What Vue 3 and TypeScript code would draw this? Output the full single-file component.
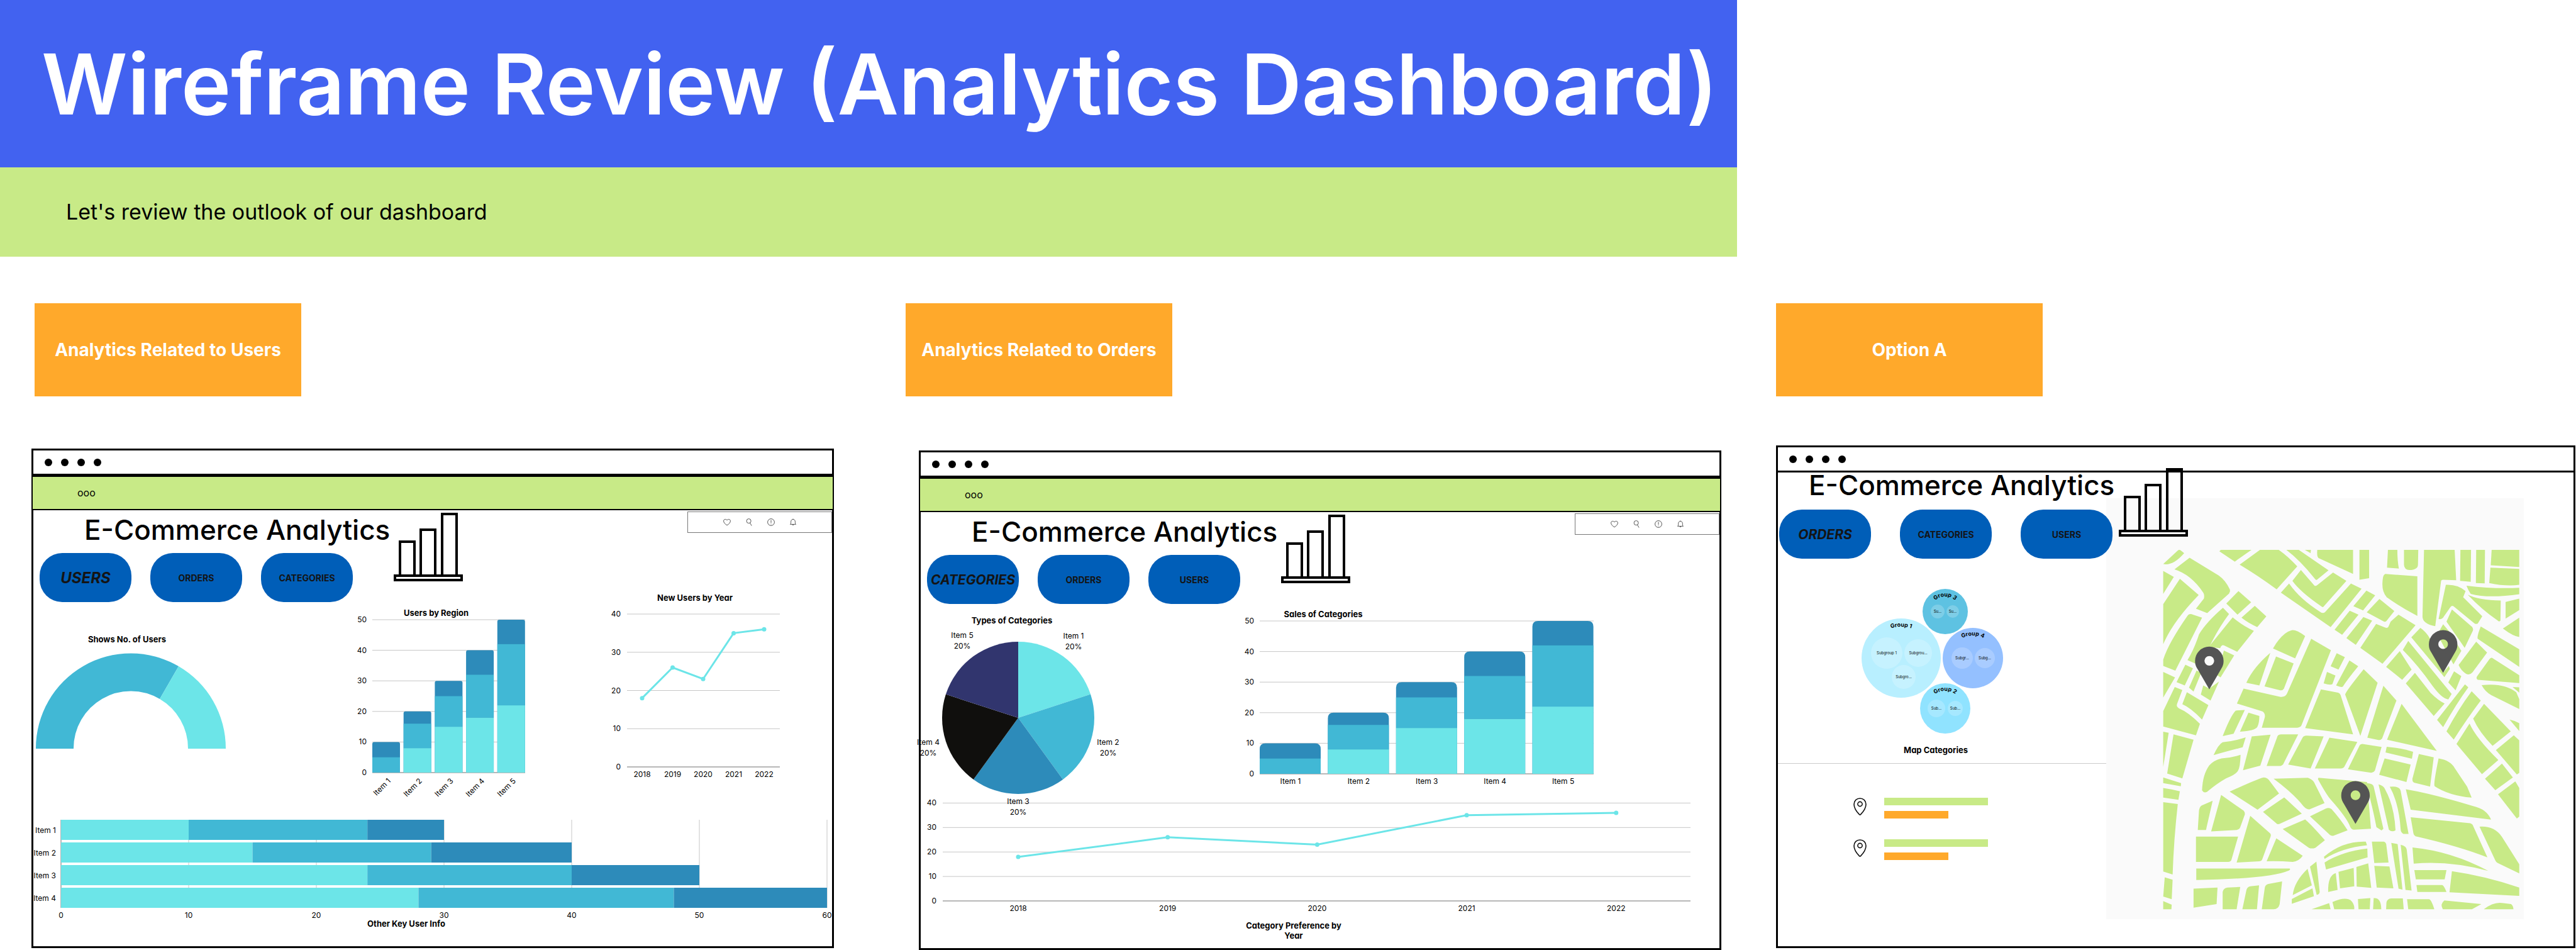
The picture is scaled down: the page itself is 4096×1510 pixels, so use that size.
<script setup lang="ts">
interface Board {
  id: 'users' | 'orders' | 'map'
  label: string
  tabs: string[]
  menuBar: boolean
}

interface Dot {
  x: number
  y: number
}

interface Bubble {
  cx: number
  cy: number
  r: number
  text: string
}

interface Group extends Bubble {
  fill: string
  arc: number
  children: Bubble[]
}

const boards: Board[] = [
  { id: 'users', label: 'Analytics Related to Users', tabs: ['USERS', 'ORDERS', 'CATEGORIES'], menuBar: true },
  { id: 'orders', label: 'Analytics Related to Orders', tabs: ['CATEGORIES', 'ORDERS', 'USERS'], menuBar: true },
  { id: 'map', label: 'Option A', tabs: ['ORDERS', 'CATEGORIES', 'USERS'], menuBar: false },
]

const palette = ['#6ce5e8', '#41b8d5', '#2d8bba']

// Stacked columns: light, middle and dark share of each item
const columns = [
  [0, 5, 5],
  [8, 8, 4],
  [15, 10, 5],
  [18, 14, 8],
  [22, 20, 8],
]

const rows = [
  [10, 14, 6],
  [15, 14, 11],
  [24, 16, 10],
  [28, 20, 12],
]

const years = [2018, 2019, 2020, 2021, 2022]
const trend = [18, 26, 23, 35, 36]
const fiveTicks = [0, 10, 20, 30, 40, 50]
const fourTicks = [0, 10, 20, 30, 40]
const sixTicks = [0, 10, 20, 30, 40, 50, 60]

const sum = (list: number[]) => list.reduce((a, b) => a + b, 0)

function stack(parts: number[], scale: number) {
  return parts.map((value, k) => ({
    start: sum(parts.slice(0, k)) * scale,
    size: value * scale,
    fill: palette[k],
  }))
}

// Column outline with only its two top corners rounded
function columnShape(x: number, width: number, base: number, height: number, r: number) {
  const top = base - height
  return `M${x} ${base}V${top + r}Q${x} ${top} ${x + r} ${top}H${x + width - r}Q${x + width} ${top} ${x + width} ${top + r}V${base}Z`
}

function columnSet(left: number, pitch: number, width: number, base: number, scale: number, r: number) {
  return columns.map((parts, i) => ({
    x: left + pitch * i,
    shape: columnShape(left + pitch * i, width, base, sum(parts) * scale, r),
    parts: stack(parts, scale).slice(0, 2).map((p) => ({ ...p, y: base - p.start - p.size })),
  }))
}

const regionColumns = columnSet(27, 49.7, 44, 246, 4.86, 3)
const salesColumns = columnSet(28, 108.4, 97, 246, 4.86, 9)
const rowBars = rows.map((parts, i) => ({ y: i * 36, parts: stack(parts, 20.3) }))

function trendDots(left: number, pitch: number, base: number, scale: number): Dot[] {
  return trend.map((value, i) => ({ x: left + pitch * i, y: base - value * scale }))
}

const newUserDots = trendDots(66, 48.5, 261, 6.075)
const preferenceDots = trendDots(155, 237.7, 162, 3.89)
const asPoints = (dots: Dot[]) => dots.map((d) => `${d.x},${d.y}`).join(' ')

const sliceColors = ['#6ce5e8', '#41b8d5', '#2d8bba', '#100f0d', '#31356e']
const slices = sliceColors.map((fill, i) => {
  const at = (turn: number) => {
    const a = turn * Math.PI * 2
    return `${155 + 121 * Math.sin(a)} ${147 - 121 * Math.cos(a)}`
  }
  return { fill, d: `M155 147L${at(i / 5)}A121 121 0 0 1 ${at((i + 1) / 5)}Z` }
})
const sliceLabels = [
  { x: 243, y: 21 },
  { x: 298, y: 190 },
  { x: 155, y: 284 },
  { x: 12, y: 190 },
  { x: 66, y: 20 },
]

const groups: Group[] = [
  {
    cx: 62, cy: 110, r: 63, arc: 50, text: 'Group 1', fill: '#b8efff',
    children: [
      { cx: 39, cy: 102, r: 25, text: 'Subgroup 1' },
      { cx: 89, cy: 102, r: 22, text: 'Subgrou…' },
      { cx: 66, cy: 140, r: 19, text: 'Subgro…' },
    ],
  },
  {
    cx: 132, cy: 36, r: 36, arc: 24, text: 'Group 3', fill: '#5ec2e2',
    children: [
      { cx: 120, cy: 36, r: 11, text: 'Su…' },
      { cx: 144, cy: 36, r: 10, text: 'Su…' },
    ],
  },
  {
    cx: 176, cy: 110, r: 48, arc: 36, text: 'Group 4', fill: '#94c0ff',
    children: [
      { cx: 159, cy: 110, r: 17, text: 'Subgr…' },
      { cx: 195, cy: 110, r: 16, text: 'Subg…' },
    ],
  },
  {
    cx: 132, cy: 190, r: 40, arc: 28, text: 'Group 2', fill: '#90e3ff',
    children: [
      { cx: 118, cy: 190, r: 14, text: 'Sub…' },
      { cx: 148, cy: 190, r: 12, text: 'Sub…' },
    ],
  },
]

const arcPath = (g: Group) =>
  `M${g.cx - g.arc} ${g.cy}A${g.arc} ${g.arc} 0 0 1 ${g.cx + g.arc} ${g.cy}`

const pins: Dot[] = [
  { x: 360, y: 608 },
  { x: 1131, y: 553 },
  { x: 842, y: 1054 },
]

// City blocks of the street map
const blocks = [
  'M208 287L255 243Q261 238 266 242L277 251Q240 294 208 287Z',
  'M295 266L391 325Q414 341 428 372Q430 378 425 385L353 450L316 435L342 402Q345 390 340 382Q300 322 245 305Z',
  'M208 310L243 330L208 386Z',
  'M263 336L325 390Q240 478 208 553V420Z',
  'M300 453L336 465L248 641L208 625V604Q225 550 287 460Q292 452 300 453Z',
  'M405 432L425 453Q390 500 360 562L320 620L288 606Q310 570 326 520Q350 480 405 432Z',
  'M437 464Q470 492 507 509L452 578L408 557Q400 554 396 566L358 562Z',
  'M456 377L498 414L453 455L416 418Z',
  'M510 426L548 461L518 496Q490 484 466 465Z',
  'M408 574L442 590L397 663L385 655Z',
  'M281 621L306 633L279 690L252 679Z',
  'M318 640L333 648L308 710L293 697Z',
  'M340 690L360 700L392 677L364 740L332 720Z',
  'M208 645L247 663L208 730Z',
  'M246 695L271 705L254 750Q250 760 260 766Q290 778 329 817L316 855L208 826V775Z',
  'M286 712L357 755L336 803Q300 765 271 752Z',
  'M208 843L226 847L208 960Z',
  'M242 852L308 870L271 998L221 982Z',
  'M208 995L267 1014L266 1024L208 1014Z',
  'M208 1030Q235 1034 263 1041L258 1069L208 1062Z',
  'M208 1077L256 1083Q243 1200 239 1317L208 1307Z',
  'M213 1326L239 1334L236 1399L208 1390Z',
  'M208 1405L236 1417L235 1432H208Z',
  'M398 240H499L444 279L393 245Z',
  'M527 240H589Q620 262 650 295L582 371Q520 325 460 289Z',
  'M614 240H655L753 308L715 339Q712 341 709 337Q660 275 614 240Z',
  'M662 307L706 358Q710 362 716 357L768 315L812 343L738 427Q735 432 730 428Q660 380 634 343Z',
  'M623 352Q660 405 726 446Q735 453 742 446L827 352L862 369L760 496L596 382Z',
  'M675 240H695L694 251Z',
  'M716 240H834V320L720 267Q714 262 716 240Z',
  'M855 240H887V334L855 339Z',
  'M878 375L907 391L867 441L835 427Z',
  'M921 403L970 443L945 475Q942 480 936 478L879 447Z',
  'M823 442L852 455L798 522L773 505Z',
  'M868 463L897 475L843 555L812 533Z',
  'M984 455L1040 490L931 618L858 565L910 486L940 498Q946 500 950 496L958 478Z',
  'M949 240H980Q980 275 985 302L946 299Z',
  'M1002 240H1049L1048 290Q1047 306 1020 307Q1003 306 1002 290Z',
  'M940 320L1046 328V459Q990 430 945 397Q925 375 933 330Q935 322 940 320Z',
  'M1068 240H1169L1174 341L1131 339Q1124 339 1124 345L1105 493Q1062 485 1063 460Z',
  'M1188 240H1223L1222 346L1187 343Z',
  'M1240 240H1269L1268 351L1239 350Z',
  'M1291 240H1382V297L1288 291Z',
  'M1287 299L1382 303V356Q1340 362 1283 350Z',
  'M1208 359Q1300 370 1382 366V387Q1280 402 1222 386Q1214 375 1208 359Z',
  'M1212 389Q1250 408 1321 408L1320 475Q1316 480 1310 474Q1260 440 1212 389Z',
  'M1337 413L1382 402V440L1337 468Z',
  'M1382 465V529Q1362 527 1328 501Z',
  'M1140 356Q1180 354 1205 377L1197 397L1260 460L1245 485Q1238 488 1232 482L1165 427Q1159 424 1155 430L1130 466Q1122 472 1116 469Z',
  'M1160 438L1226 495Q1231 500 1229 508L1202 565L1142 478Z',
  'M1131 487L1150 510L1191 575L1165 620L1112 520Z',
  'M1255 494L1382 570V628L1245 535Q1242 527 1255 494Z',
  'M1240 545L1276 581L1228 646Q1218 658 1205 650Q1190 640 1182 622Z',
  'M1292 598L1382 656V682L1245 671Q1238 666 1244 658L1284 602Q1288 597 1292 598Z',
  'M1258 689Q1330 680 1372 712L1382 735V768L1290 722Q1270 712 1258 689Z',
  'M1360 695L1382 696V714Z',
  'M1350 803Q1366 806 1382 815V841Z',
  'M1056 499Q1075 512 1088 535L1131 648L1150 625L1153 635L1135 662L1026 530Z',
  'M1016 542L1159 718L1148 736Q1128 735 1095 690Q1050 625 998 572Z',
  'M988 576L1027 637L996 671L943 628Z',
  'M1038 648L1090 715Q1115 740 1136 750L1100 791L1008 683Z',
  'M1167 643L1191 659L1172 706L1148 680Z',
  'M1203 686L1214 696Q1175 750 1131 828L1111 804Z',
  'M1225 709L1255 740Q1210 800 1166 869L1142 842Q1180 770 1225 709Z',
  'M1266 751L1354 842L1294 890Q1250 845 1230 800Z',
  'M1218 816Q1240 865 1313 937L1259 984L1175 884Z',
  'M1364 855L1382 872V980L1374 985L1305 904Z',
  'M1325 949L1361 995L1303 1037L1269 999Z',
  'M1369 1008L1382 1030V1125L1374 1131L1312 1051Z',
  'M676 526L643 600L570 567Q600 515 630 507Q645 503 676 526Z',
  'M561 582L525 690L482 681Q505 630 561 582Z',
  'M580 594L638 617L606 700Q602 707 594 706L542 693Z',
  'M696 535L761 573L664 822Q660 830 650 830H533L543 795Q545 782 535 776Q500 765 451 750L473 700L595 728Q612 729 617 715Z',
  'M780 583L807 596L786 637L760 626Z',
  'M748 645L776 657L766 685Q760 690 737 683Z',
  'M822 607L851 626Q815 670 800 694Q794 697 778 690Z',
  'M869 636L915 681L858 857L808 720Q808 712 869 636Z',
  'M934 691L977 740L930 865Q926 871 918 871L881 863Z',
  'M728 703L785 714Q791 716 793 722L834 852L676 831Z',
  'M994 751L1110 907L946 870Z',
  'M447 773L477 771L440 850L404 858Q430 790 447 773Z',
  'M489 780L525 791Q525 815 518 828Q510 840 461 843Z',
  'M480 862L470 895Q430 905 374 921Q390 885 404 878Q440 875 480 862Z',
  'M463 920Q462 960 455 972Q448 985 415 998Q385 1015 352 1043Q342 1048 336 1038Q338 985 360 955Q375 938 400 932Q430 930 463 920Z',
  'M500 859L562 853L528 956L471 971Z',
  'M597 852H653L604 950Q600 957 590 957H549L585 858Q588 852 597 852Z',
  'M680 856L737 859L694 965L620 952L668 862Q672 856 680 856Z',
  'M756 863L848 877L806 958Q803 965 793 965H708Z',
  'M865 884L928 894L906 972Q900 980 890 979L817 968L855 890Q858 884 865 884Z',
  'M945 893Q1000 898 1032 910L1028 933L941 912Z',
  'M938 932L1024 952L1010 1010L920 986Z',
  'M1051 917L1100 928L1088 1025L1035 1012Q1028 1008 1030 998Z',
  'M1116 932Q1155 938 1170 965L1210 1025L1225 1062Q1150 1055 1103 1024Q1098 1020 1116 932Z',
  'M427 1042Q530 995 540 995Q553 996 560 1008L590 1048L519 1102Z',
  'M572 999L685 996Q698 1000 705 1010L740 1080L690 1101Q680 1101 670 1090Q640 1050 572 999Z',
  'M607 1061L665 1115L592 1149Q585 1152 580 1146L537 1109Z',
  'M720 996L880 1010L893 1165L838 1168Q830 1169 825 1160Q815 1130 760 1068Q745 1050 718 1000Z',
  'M692 1124L745 1098Q755 1093 763 1100Q790 1130 816 1170L770 1188Q765 1190 758 1186Z',
  'M602 1166L676 1134Q700 1155 741 1203L710 1228Q698 1233 688 1228Z',
  'M399 1053L473 1105Q478 1110 477 1118L462 1160Q459 1168 450 1169L366 1174Z',
  'M371 1072L349 1169H322L326 1105Q328 1092 335 1088Z',
  'M495 1122L558 1178Q565 1183 562 1191L534 1268Q532 1273 525 1273L450 1277Z',
  'M316 1191H455L433 1268Q431 1275 422 1275H316Z',
  'M581 1197L668 1255Q655 1274 635 1275Q590 1272 549 1273Z',
  'M317 1297H625Q629 1301 622 1304Q560 1331 317 1335Z',
  'M308 1364L387 1360L384 1415L308 1427Z',
  'M420 1360L462 1358L450 1432H404V1375Q406 1362 420 1360Z',
  'M495 1356L524 1353L517 1432H469L482 1370Q484 1358 495 1356Z',
  'M555 1348L600 1340L592 1415Q588 1432 572 1432H533L543 1360Q545 1350 555 1348Z',
  'M684 1298L698 1353L635 1385Q640 1340 684 1298Z',
  'M713 1274L724 1375Q722 1385 714 1384L692 1291Z',
  'M700 1363L705 1389L632 1414V1398Z',
  'M876 1208L880 1220Q800 1228 740 1265L738 1258Q800 1205 876 1208Z',
  'M881 1231L882 1260L745 1300L740 1277Q800 1240 881 1231Z',
  'M777 1312L783 1368L752 1375Q750 1320 777 1312Z',
  'M786 1308L836 1295L838 1356L791 1363Z',
  'M845 1292L884 1280L894 1361L846 1357Z',
  'M896 1208H935Q944 1210 944 1222L951 1277L904 1279Z',
  'M904 1288L954 1290L967 1363L912 1360Z',
  'M960 1212L981 1216L997 1367L984 1364Z',
  'M991 1218Q1010 1222 1011 1235L1027 1370L1007 1368Z',
  'M877 1014Q900 1015 902 1025L934 1165L928 1171L911 1160Q900 1100 877 1014Z',
  'M918 1018Q935 1022 940 1035Q970 1090 974 1170Q962 1178 952 1168Z',
  'M955 1026Q988 1022 991 1040L1017 1182H1000Q992 1178 991 1168Q985 1080 955 1026Z',
  'M1008 1034Q1100 1050 1230 1090Q1275 1100 1289 1135L1024 1102Z',
  'M1024 1127L1220 1147Q1228 1149 1231 1158L1277 1260Q1180 1222 1040 1190Q1034 1187 1033 1180Z',
  'M1251 1158Q1300 1155 1325 1192L1382 1283V1313L1310 1278Q1305 1275 1303 1270Z',
  'M1030 1227Q1160 1240 1280 1305Q1150 1270 1034 1281Z',
  'M1036 1302H1142L1136 1333H1041Z',
  'M1043 1352H1128Q1134 1354 1142 1375H1046Z',
  'M1160 1306Q1270 1322 1382 1360V1388L1152 1376Z',
  'M755 1412L760 1432H697Z',
  'M766 1408Q830 1380 838 1425V1432H772Z',
  'M850 1398L891 1395L889 1432H852Z',
  'M902 1395Q927 1393 927 1432H900Z',
  'M960 1396H998L1001 1432H943L944 1410Q946 1397 960 1396Z',
  'M1012 1399H1085Q1092 1400 1102 1432H1016Z',
  'M1135 1403L1257 1415L1226 1432H1130Q1120 1415 1135 1403Z',
  'M1265 1432Q1300 1405 1330 1412L1355 1415Q1362 1420 1363 1432Z',
]
</script>

<template>
  <main class="canvas">
    <header class="banner">
      <h1>Wireframe Review (Analytics Dashboard)</h1>
      <p>Let's review the outlook of our dashboard</p>
    </header>

    <div class="boards">
      <section v-for="board in boards" :key="board.id" class="board" :class="board.id">
        <h2 class="label">{{ board.label }}</h2>

        <article class="frame">
          <div class="chrome"><i v-for="n in 4" :key="n"></i></div>
          <div v-if="board.menuBar" class="menubar">ooo</div>

          <div class="body">
            <div class="main">
              <div class="head">
                <div class="intro">
                  <h3>E-Commerce Analytics</h3>
                  <nav class="tabs">
                    <button
                      v-for="(tab, i) in board.tabs"
                      :key="tab"
                      type="button"
                      :class="{ current: i === 0 }"
                    >{{ tab }}</button>
                  </nav>
                </div>
                <svg class="logo" viewBox="0 0 110 109" fill="none" stroke="#000" stroke-width="4" aria-hidden="true">
                  <path d="M10 99V46H33V99M43 99V27H66V99M77 99V2H100V99" />
                  <rect x="2" y="100" width="106" height="7" />
                </svg>
              </div>

              <div v-if="board.id === 'users'" class="pair users-pair">
                <figure class="gauge">
                  <figcaption>Shows No. of Users</figcaption>
                  <svg viewBox="0 0 302 151">
                    <path fill="#41b8d5" d="M0 151A151 151 0 0 1 227 20L197 72A91 91 0 0 0 60 151Z" />
                    <path fill="#6ce5e8" d="M227 20A151 151 0 0 1 302 151H242A91 91 0 0 0 197 72Z" />
                  </svg>
                </figure>
                <figure class="region">
                  <figcaption>Users by Region</figcaption>
                  <svg viewBox="0 0 275 290">
                    <g v-for="t in fiveTicks" :key="t">
                      <line x1="27" x2="270" :y1="246 - t * 4.86" :y2="246 - t * 4.86" class="grid" :class="{ axis: t === 0 }" />
                      <text x="18" :y="250 - t * 4.86" text-anchor="end">{{ t }}</text>
                    </g>
                    <g v-for="(c, i) in regionColumns" :key="i">
                      <path :d="c.shape" fill="#2d8bba" />
                      <rect v-for="(p, k) in c.parts" :key="k" :x="c.x" :y="p.y" width="44" :height="p.size" :fill="p.fill" />
                      <text text-anchor="end" :transform="`translate(${c.x + 30} 260) rotate(-45)`">Item {{ i + 1 }}</text>
                    </g>
                  </svg>
                </figure>
              </div>

              <div v-else-if="board.id === 'orders'" class="pair orders-pair">
                <figure class="types">
                  <figcaption>Types of Categories</figcaption>
                  <svg viewBox="0 0 320 276">
                    <path v-for="s in slices" :key="s.fill" :d="s.d" :fill="s.fill" />
                    <g v-for="(l, i) in sliceLabels" :key="i" text-anchor="middle">
                      <text :x="l.x" :y="l.y">Item {{ i + 1 }}</text>
                      <text :x="l.x" :y="l.y + 17">20%</text>
                    </g>
                  </svg>
                </figure>
                <figure class="sales">
                  <figcaption>Sales of Categories</figcaption>
                  <svg viewBox="0 0 565 270">
                    <g v-for="t in fiveTicks" :key="t">
                      <line x1="28" x2="559" :y1="246 - t * 4.86" :y2="246 - t * 4.86" class="grid" :class="{ axis: t === 0 }" />
                      <text x="19" :y="250 - t * 4.86" text-anchor="end">{{ t }}</text>
                    </g>
                    <g v-for="(c, i) in salesColumns" :key="i">
                      <path :d="c.shape" fill="#2d8bba" />
                      <rect v-for="(p, k) in c.parts" :key="k" :x="c.x" :y="p.y" width="97" :height="p.size" :fill="p.fill" />
                      <text text-anchor="middle" :x="c.x + 49" y="262">Item {{ i + 1 }}</text>
                    </g>
                  </svg>
                </figure>
              </div>

              <template v-else>
                <figure class="groups">
                  <svg viewBox="0 0 224 230">
                    <g v-for="(g, i) in groups" :key="g.text" text-anchor="middle">
                      <circle :cx="g.cx" :cy="g.cy" :r="g.r" :fill="g.fill" />
                      <path :id="`arc-${i}`" :d="arcPath(g)" fill="none" />
                      <text class="group-name">
                        <textPath :href="`#arc-${i}`" startOffset="50%">{{ g.text }}</textPath>
                      </text>
                      <g v-for="c in g.children" :key="c.cx">
                        <circle :cx="c.cx" :cy="c.cy" :r="c.r" fill="#fff" fill-opacity="0.2" />
                        <text class="tiny" :x="c.cx" :y="c.cy + 2">{{ c.text }}</text>
                      </g>
                    </g>
                  </svg>
                  <figcaption>Map Categories</figcaption>
                </figure>
                <ul class="places">
                  <li v-for="n in 2" :key="n">
                    <svg viewBox="0 0 21 28" fill="none" stroke="#111" stroke-width="1.6" aria-hidden="true">
                      <path d="M10.5 1C16 1 20 5 20 10.500C20 16 15 23 11.500 26.600Q10.500 27.600 9.500 26.600C6 23 1 16 1 10.500C1 5 5 1 10.500 1Z" />
                      <circle cx="10.500" cy="10" r="3.600" />
                    </svg>
                    <div><b></b><b></b></div>
                  </li>
                </ul>
              </template>
            </div>

            <div v-if="board.menuBar" class="side">
              <div class="tools">
                <button type="button" aria-label="Favourites">
                  <svg viewBox="0 0 16 16"><path d="M8 14.500C4 12 .8 9 .8 5.500C.8 1.500 6 .5 8 4C10 .5 15.200 1.500 15.200 5.500C15.200 9 12 12 8 14.500Z" /></svg>
                </button>
                <button type="button" aria-label="Search">
                  <svg viewBox="0 0 16 16"><circle cx="7.500" cy="5.500" r="4.700" /><path d="M10 9.500L13.500 15.500" /></svg>
                </button>
                <button type="button" aria-label="Information">
                  <svg viewBox="0 0 16 16"><circle cx="8" cy="8" r="7.200" /><path d="M8 3.500V9.500M8 11.300V12.500" /></svg>
                </button>
                <button type="button" aria-label="Notifications">
                  <svg viewBox="0 0 16 16"><path d="M2 12.500C3.500 11.500 3.500 10 3.500 7C3.500 4 5.500 2 8 2C10.500 2 12.500 4 12.500 7C12.500 10 12.500 11.500 14 12.500ZM8 2V.8M6.300 13Q8 16 9.700 13" /></svg>
                </button>
              </div>
              <figure v-if="board.id === 'users'" class="new-users">
                <figcaption>New Users by Year</figcaption>
                <svg viewBox="0 0 290 282">
                  <g v-for="t in fourTicks" :key="t">
                    <line x1="42" x2="285" :y1="261 - t * 6.075" :y2="261 - t * 6.075" class="grid" :class="{ axis: t === 0 }" />
                    <text x="32" :y="265 - t * 6.075" text-anchor="end">{{ t }}</text>
                  </g>
                  <polyline :points="asPoints(newUserDots)" class="trend" />
                  <g v-for="(d, i) in newUserDots" :key="i">
                    <circle :cx="d.x" :cy="d.y" r="3.5" fill="#6ce5e8" />
                    <text :x="d.x" y="277" text-anchor="middle">{{ years[i] }}</text>
                  </g>
                </svg>
              </figure>
            </div>

            <div v-else class="map">
              <svg viewBox="20 69 1377 1396" preserveAspectRatio="none" role="img" aria-label="Street map">
                <path v-for="(d, i) in blocks" :key="i" :d="d" fill="#c8ea87" />
                <path
                  v-for="(p, i) in pins"
                  :key="`pin-${i}`"
                  :transform="`translate(${p.x} ${p.y})`"
                  fill="#545454"
                  fill-rule="evenodd"
                  d="M0 -47A47 47 0 0 1 47 0C47 14 43 20 39 27L0 95L-39 27C-43 20 -47 14 -47 0A47 47 0 0 1 0 -47ZM0 -16A16 16 0 1 0 0 16A16 16 0 1 0 0 -16Z"
                />
              </svg>
            </div>
          </div>

          <figure v-if="board.id === 'users'" class="key-info">
            <svg viewBox="0 0 1270 157">
              <g v-for="t in sixTicks" :key="t">
                <line :x1="44 + t * 20.3" :x2="44 + t * 20.3" y1="0" y2="140" class="grid" :class="{ axis: t === 0 }" />
                <text :x="44 + t * 20.3" y="156" text-anchor="middle">{{ t }}</text>
              </g>
              <g v-for="(r, i) in rowBars" :key="i">
                <rect v-for="(p, k) in r.parts" :key="k" :x="44 + p.start" :y="r.y" :width="p.size" height="32" :fill="p.fill" />
                <text x="36" :y="r.y + 21" text-anchor="end">Item {{ i + 1 }}</text>
              </g>
            </svg>
            <figcaption>Other Key User Info</figcaption>
          </figure>

          <figure v-if="board.id === 'orders'" class="preference">
            <svg viewBox="0 0 1270 185">
              <g v-for="t in fourTicks" :key="t">
                <line x1="35" x2="1224" :y1="162 - t * 3.89" :y2="162 - t * 3.89" class="grid" :class="{ axis: t === 0 }" />
                <text x="25" :y="166 - t * 3.89" text-anchor="end">{{ t }}</text>
              </g>
              <polyline :points="asPoints(preferenceDots)" class="trend" />
              <g v-for="(d, i) in preferenceDots" :key="i">
                <circle :cx="d.x" :cy="d.y" r="3.5" fill="#6ce5e8" />
                <text :x="d.x" y="178" text-anchor="middle">{{ years[i] }}</text>
              </g>
            </svg>
            <figcaption>Category Preference by<br />Year</figcaption>
          </figure>
        </article>
      </section>
    </div>
  </main>
</template>

<style>
body {
  background: #fff;
}
</style>

<style scoped>
.canvas {
  font-family: Inter, "Noto Sans", sans-serif;
  color: #000;
  overflow: hidden;
}
h1,
h2,
h3,
p,
ul,
figure {
  margin: 0;
  padding: 0;
}
svg {
  display: block;
  width: 100%;
  height: auto;
  overflow: visible;
}
button {
  font: inherit;
  color: inherit;
  border: 0;
  padding: 0;
  background: none;
}

.banner {
  width: 67.44%;
}
.banner h1 {
  background: #4262f0;
  color: #fff;
  font-size: 134px;
  font-weight: 600;
  line-height: 266px;
  padding-left: 66px;
  white-space: nowrap;
}
.banner p {
  background: #c8ea87;
  font-size: 34px;
  line-height: 142px;
  padding-left: 105px;
}

.boards {
  display: grid;
  grid-template-columns: 1411fr 1411fr 1274fr;
  align-items: start;
  padding-top: 74px;
}
.board {
  padding-left: 50px;
}
.board.orders {
  padding-left: 29px;
}
.board.map {
  padding-left: 2px;
}
.label {
  width: 424px;
  background: #ffa92b;
  color: #fff;
  font-size: 28px;
  font-weight: 700;
  line-height: 148px;
  text-align: center;
  white-space: nowrap;
}
.users .label {
  margin-left: 5px;
}

.frame {
  border: 3px solid #000;
  margin: 83px 85px 0 0;
  font-feature-settings: "cv11";
}
.orders .frame {
  margin: 86px 85px 0 21px;
}
.map .frame {
  margin: 78px 1px 0 0;
}
.chrome {
  display: flex;
  align-items: center;
  gap: 14px;
  height: 37px;
  padding-left: 18px;
  border-bottom: 3px solid #000;
}
.chrome i {
  width: 12px;
  height: 12px;
  border-radius: 50%;
  background: #000;
}
.menubar {
  margin: 0 -3px;
  padding-left: 71px;
  border: 2px solid #000;
  background: #c8ea87;
  font-size: 16px;
  line-height: 51px;
}
.body {
  display: grid;
  grid-template-columns: 902fr 368fr;
}
.map .body {
  grid-template-columns: 522fr 664fr 79fr;
}
.main {
  position: relative;
  z-index: 1;
  min-width: 0;
}
.head {
  display: flex;
  align-items: flex-start;
}
.intro {
  flex: none;
  width: 573px;
  padding-top: 11px;
}
h3 {
  font-size: 44px;
  font-weight: 500;
  line-height: 40px;
  padding-left: 81px;
  white-space: nowrap;
}
.tabs {
  display: flex;
  gap: 30px;
  margin-top: 17px;
  padding-left: 10px;
}
.tabs button {
  flex: none;
  width: 146px;
  height: 78px;
  border-radius: 36px;
  background: #005eb8;
  color: #141414;
  font-size: 14px;
  font-weight: 700;
}
.tabs .current {
  font-size: 21px;
  font-style: italic;
}
.users .tabs .current {
  font-size: 24px;
}
.logo {
  flex: none;
  width: 110px;
  margin-top: 4px;
}
.map .intro {
  width: 542px;
  padding-top: 0;
}
.map h3 {
  padding-left: 49px;
}
.map .tabs {
  gap: 46px;
  padding-left: 2px;
  margin-top: 19px;
}
.map .logo {
  margin-top: -7px;
}

figcaption {
  font-size: 13px;
  font-weight: 700;
  line-height: 16px;
  text-align: center;
}
svg text {
  font-size: 12px;
}
.grid {
  stroke: #c6c6c6;
  stroke-width: 1;
}
.axis {
  stroke: #707070;
}
.trend {
  fill: none;
  stroke: #6ce5e8;
  stroke-width: 3;
}

.pair {
  display: grid;
  align-items: start;
}
.users-pair {
  grid-template-columns: 302fr 206fr 275fr 115fr;
  margin-left: 4px;
}
.gauge {
  margin-top: 51px;
}
.gauge figcaption {
  padding: 0 12px 15px 0;
}
.region {
  grid-column: 3;
  margin-top: 9px;
}
.region figcaption {
  padding-right: 18px;
}
.orders .body {
  grid-template-columns: 1fr;
}
.orders .main,
.orders .side {
  grid-area: 1 / 1;
}
.orders-pair {
  grid-template-columns: 320fr 191fr 565fr 194fr;
}
.types {
  margin-top: 18px;
}
.types figcaption {
  padding-right: 30px;
}
.sales {
  grid-column: 3;
  margin-top: 8px;
}
.sales figcaption {
  padding-right: 307px;
}

.side {
  display: flex;
  flex-direction: column;
  align-items: flex-end;
}
.tools {
  display: flex;
  align-items: center;
  justify-content: center;
  gap: 23px;
  width: 228px;
  height: 32px;
  margin-top: 2px;
  border: 1px solid #777;
}
.tools button {
  width: 12px;
}
.tools svg {
  fill: none;
  stroke: #222;
  stroke-width: 1;
}
.new-users {
  align-self: flex-end;
  width: 290px;
  margin: 95px 78px 0 0;
}
.new-users figcaption {
  padding-left: 10px;
}

.key-info {
  padding-bottom: 28px;
  margin-top: 31px;
}
.key-info figcaption {
  padding-right: 84px;
}
.preference {
  padding-bottom: 12px;
}
.preference figcaption {
  padding: 8px 84px 0 0;
}

.groups {
  width: 224px;
  margin: 48px 0 0 134px;
}
.groups figcaption {
  margin: 18px 0 13px 10px;
}
.groups .group-name {
  font-size: 9px;
  font-weight: 700;
}
.groups .tiny {
  font-size: 6px;
}
.places {
  list-style: none;
  border-top: 1px solid #ccc;
  padding: 54px 0 126px 120px;
}
.places li {
  display: flex;
  align-items: flex-start;
  gap: 28px;
}
.places li + li {
  margin-top: 33px;
}
.places svg {
  width: 21px;
}
.places b {
  display: block;
  width: 165px;
  height: 12px;
  background: #c8ea87;
}
.places b + b {
  width: 102px;
  margin-top: 9px;
  background: #ffa92b;
}
.map .map {
  align-self: start;
  margin: 41px 0 43px;
  background: #fafafa;
}
.map .map svg {
  aspect-ratio: 664 / 669;
}
</style>
